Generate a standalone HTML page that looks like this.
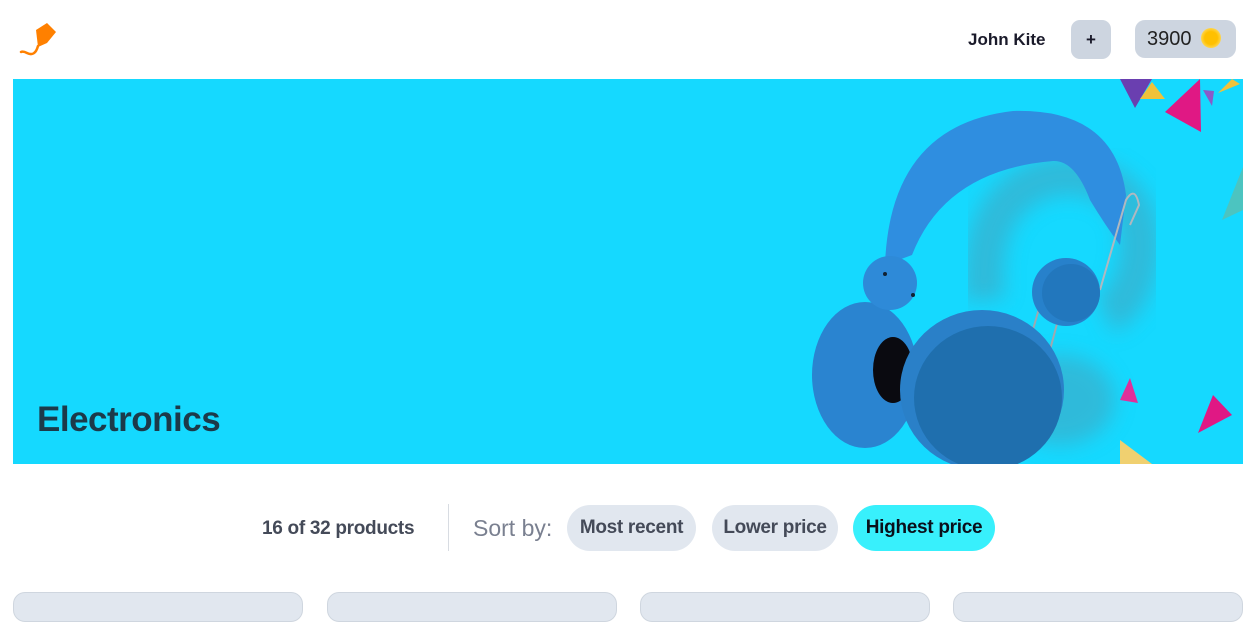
<!DOCTYPE html>
<html><head><meta charset="utf-8"><style>
*{margin:0;padding:0;box-sizing:border-box}
body{width:1260px;height:603px;background:#fff;font-family:"Liberation Sans",sans-serif;overflow:hidden;position:relative}
.name{position:absolute;left:968px;top:30px;font-weight:bold;font-size:17px;color:#1a1a2a}
.plus{position:absolute;left:1071px;top:20px;width:40px;height:39px;border-radius:9px;background:#cdd5e0;text-align:center;line-height:39px;font-weight:bold;font-size:17px;color:#1a1a2a}
.coins{position:absolute;left:1135px;top:20px;width:101px;height:38px;border-radius:10px;background:#cdd5e0;font-size:20px;color:#222;padding-left:12px;line-height:38px}
.coin{position:absolute;left:1201px;top:28px;width:20px;height:20px;border-radius:50%;background:radial-gradient(#ffc000 45%,#ffd54a 70%,#ffe78a)}
.banner{position:absolute;left:13px;top:79px;width:1230px;height:385px;background:#15d9ff;overflow:hidden}
.title{position:absolute;font-size:35px;font-weight:bold;color:#1c3a4a;letter-spacing:-0.5px}
.count{position:absolute;left:262px;top:518px;font-size:19px;font-weight:bold;color:#444a58;letter-spacing:-0.3px}
.sep{position:absolute;left:448px;top:504px;width:1px;height:47px;background:#d8dce2}
.sort{position:absolute;left:473px;top:515px;font-size:23px;color:#7a8090}
.pill{position:absolute;top:505px;height:46px;border-radius:23px;background:#e1e7ef;font-size:19px;font-weight:bold;color:#444a58;line-height:46px;text-align:center;letter-spacing:-0.3px}
.card{position:absolute;top:592px;height:30px;width:290px;border-radius:12px;background:#e1e7ef;border:1px solid #cfd6df}
</style></head><body>
<svg style="position:absolute;left:18px;top:20px" width="42" height="40" viewBox="0 0 42 40">
<path d="M18 10 L29 3 L38 12 L29 23 L20 27 Z" fill="#ff8000"/>
<path d="M20 26 Q17 37 9 33 Q5 31 3 32" stroke="#ff8000" stroke-width="2.5" fill="none" stroke-linecap="round"/>
</svg>
<div class="name">John Kite</div>
<div class="plus">+</div>
<div class="coins">3900</div>
<div class="coin"></div>
<div class="banner">
<svg width="1230" height="385" viewBox="13 79 1230 385" style="position:absolute;left:0;top:0">
<defs><filter id="b"><feGaussianBlur stdDeviation="10"/></filter></defs>
<g fill="#3aaecb" opacity="0.7" filter="url(#b)">
<path d="M985 300 Q975 190 1060 175 Q1140 175 1140 250 Q1135 300 1105 315" fill="none" stroke="#3aaecb" stroke-width="40"/>
<ellipse cx="1060" cy="400" rx="55" ry="45"/>
</g>
<path d="M885 265 Q890 125 1013 111 Q1115 108 1126 195 L1120 245 Q1105 225 1090 200 Q1075 160 1053 161 Q945 170 912 255 Z" fill="#2f8ee0"/>
<path d="M1100 290 L1126 200 Q1135 185 1139 205 L1130 225" stroke="#b0b8c0" stroke-width="2" fill="none"/>
<path d="M1030 340 L1050 270 M1050 350 L1070 275" stroke="#a0a8b0" stroke-width="2"/>
<ellipse cx="865" cy="375" rx="53" ry="73" fill="#2a84d0"/>
<circle cx="890" cy="283" r="27" fill="#2e8ad8"/>
<circle cx="885" cy="274" r="2" fill="#123"/><circle cx="913" cy="295" r="2" fill="#123"/>
<ellipse cx="893" cy="370" rx="20" ry="33" fill="#0a0a10"/>
<ellipse cx="982" cy="390" rx="82" ry="80" fill="#2a80c8"/>
<ellipse cx="988" cy="398" rx="74" ry="72" fill="#1f6fae"/>
<circle cx="1066" cy="292" r="34" fill="#2781cb"/>
<circle cx="1071" cy="293" r="29" fill="#2277bd"/>
<polygon points="1120,79 1152,79 1135,108" fill="#6a3fb0"/>
<polygon points="1140,99 1152,82 1165,99" fill="#f0c23a"/>
<polygon points="1165,112 1200,79 1201,132" fill="#e01884"/>
<polygon points="1203,90 1214,91 1212,106" fill="#8a5ac8"/>
<polygon points="1218,93 1240,84 1232,79" fill="#f0c23a"/>
<polygon points="1222,220 1243,167 1243,210" fill="#4cc4c0"/>
<polygon points="1120,400 1130,378 1138,403" fill="#e0309a"/>
<polygon points="1198,433 1213,395 1232,415" fill="#e01884"/>
<polygon points="1120,440 1120,464 1152,464" fill="#f0d070"/>
</svg>
<div class="title" style="left:24px;top:321px">Electronics</div>
</div>
<div class="count">16 of 32 products</div>
<div class="sep"></div>
<div class="sort">Sort by:</div>
<div class="pill" style="left:567px;width:129px">Most recent</div>
<div class="pill" style="left:712px;width:126px">Lower price</div>
<div class="pill" style="left:853px;width:142px;background:#38f0fc;color:#0a0f1a">Highest price</div>
<div class="card" style="left:13px"></div>
<div class="card" style="left:327px"></div>
<div class="card" style="left:640px"></div>
<div class="card" style="left:953px"></div>
</body></html>
